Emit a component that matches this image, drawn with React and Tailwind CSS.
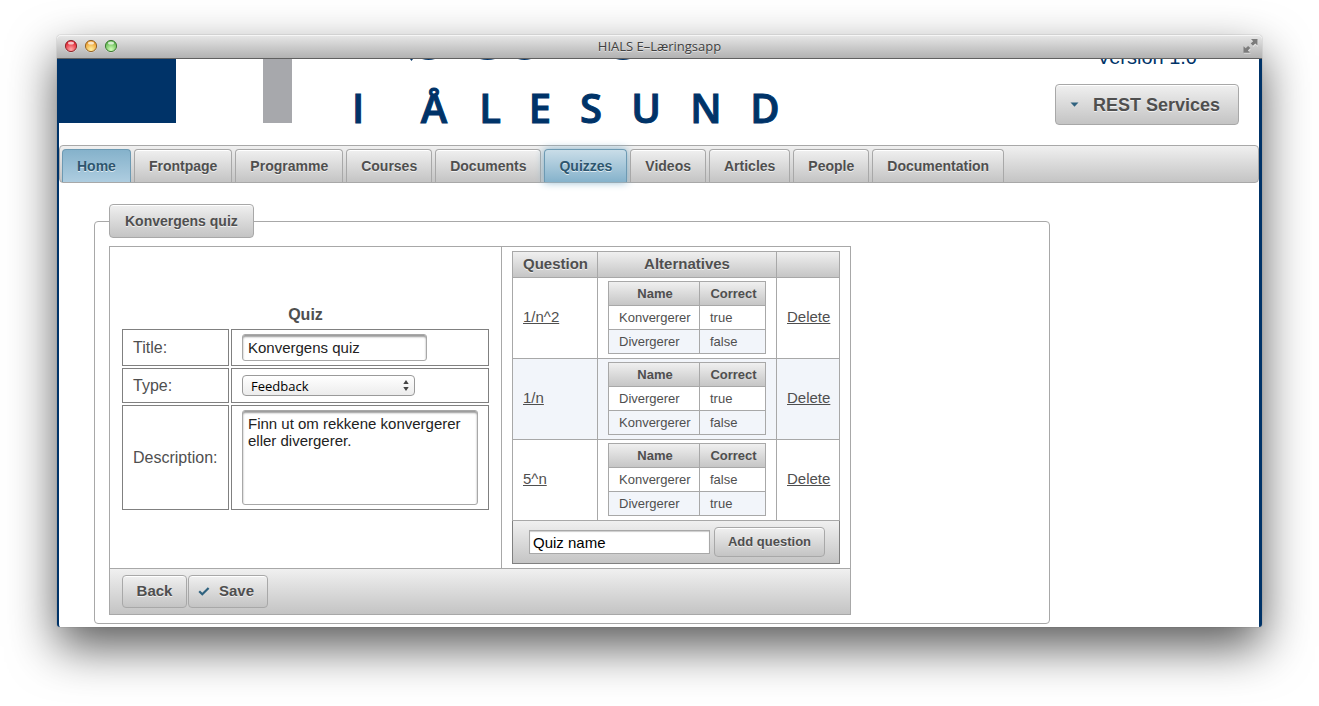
const FACE = "bg-linear-to-b from-[#f0f0f0] to-[#c4c4c4]";
const BUTTON =
  "rounded border border-[#a8a8a8] bg-linear-to-b from-[#f0f0f0] to-[#c4c4c4] font-bold text-[#4f4f4f] shadow-[inset_0_1px_0_#ffffff] [text-shadow:0_1px_0_rgba(255,255,255,0.7)]";

const tabs = [
  "Home",
  "Frontpage",
  "Programme",
  "Courses",
  "Documents",
  "Quizzes",
  "Videos",
  "Articles",
  "People",
  "Documentation",
];

const questions = [
  { name: "1/n^2", alternatives: [["Konvergerer", "true"], ["Divergerer", "false"]] },
  { name: "1/n", alternatives: [["Divergerer", "true"], ["Konvergerer", "false"]] },
  { name: "5^n", alternatives: [["Konvergerer", "false"], ["Divergerer", "true"]] },
];

function Light({ id, rim, dark, light }) {
  return (
    <svg width="14" height="14" viewBox="0 0 14 14" aria-hidden="true">
      <defs>
        <radialGradient id={id} cx="0.5" cy="0.8" r="0.7">
          <stop offset="0" stopColor={light} />
          <stop offset="1" stopColor={dark} />
        </radialGradient>
      </defs>
      <circle cx="7" cy="7.6" r="6" fill="#fff" opacity="0.5" />
      <circle cx="7" cy="7" r="5.6" fill={`url(#${id})`} stroke={rim} strokeWidth="1" />
      <ellipse cx="7" cy="4" rx="3" ry="1.6" fill="#fff" opacity="0.7" />
    </svg>
  );
}

function TitleBar() {
  return (
    <div className="flex h-6 items-center justify-between rounded-t border-b border-[#606060] bg-linear-to-b from-[#e8e8e8] to-[#b2b2b2] pr-1 pb-px pl-[7px] shadow-[inset_0_1px_0_#f6f6f6]">
      <div className="flex w-20 gap-[6px]">
        <Light id="close" rim="#8e2a2e" dark="#e01c2c" light="#ffa8a8" />
        <Light id="minimise" rim="#94652a" dark="#ec9a2a" light="#fff0a0" />
        <Light id="zoom" rim="#3f7a35" dark="#5cb44c" light="#d0ffb8" />
      </div>
      <h1 className="font-['Open_Sans','Noto_Sans',sans-serif] text-[13px] leading-5 text-[#404040] [text-shadow:0_1px_0_rgba(255,255,255,0.5)]">
        HIALS E–Læringsapp
      </h1>
      <div className="flex w-[83px] justify-end">
        <svg width="15" height="16" viewBox="0 0 15 16" aria-hidden="true">
          <path d="M8 2h7v7l-2.400-2.200-2 2.200-2.400-2.400 2.200-2zM1 9l2.400 2.200 2-2.200 2.400 2.400-2.200 2 2.200 2.300H1z" fill="#fff" opacity="0.45" />
          <path d="M8 1h6.500v6.500l-2.200-2.100-2.400 2.400-2.200-2.200 2.400-2.400z" fill="#7c7c7c" />
          <path d="M0.500 8.200l2.200 2.100 2.400-2.400 2.200 2.200-2.400 2.400 2.100 2.200H0.500z" fill="#7c7c7c" />
        </svg>
      </div>
    </div>
  );
}

function Logo() {
  return (
    <svg className="overflow-visible" width="722" height="64" viewBox="0 0 722 64" role="img" aria-label="Høgskolen i Ålesund">
      <rect x="0" y="0" width="117" height="64" fill="#003368" />
      <rect x="204" y="0" width="29" height="64" fill="#a7a8ac" />
      <path
        d="M351 0h3l-1.500 2zM363 0h13q-6.500 2-13 0zM421 0h15q-7.500 2-15 0zM459 0h13q-6.500 2-13 0zM557 0h14q-7 2-14 0z"
        fill="#003368"
      />
      <text
        x="299 375 431 481 532 587 647 706"
        y="64"
        fill="#003368"
        stroke="#003368"
        strokeWidth="1"
        fontFamily="'Open Sans','Noto Sans',sans-serif"
        fontSize="40"
        fontWeight="600"
        textAnchor="middle"
      >
        IÅLESUND
      </text>
    </svg>
  );
}

function Header() {
  return (
    <header className="flex justify-between">
      <Logo />
      <div className="flex flex-col items-end pr-5">
        <div className="flex h-2 items-end overflow-hidden pr-[42px]">
          <p className="text-xl leading-5 text-[#003368]">Version 1.0</p>
        </div>
        <button type="button" className={`mt-[17px] flex h-[41px] items-center gap-[14px] pr-[18px] pl-[14px] text-lg ${BUTTON}`}>
          <svg width="9" height="5" viewBox="0 0 9 5" aria-hidden="true">
            <path d="M0.500 0.500h8L4.500 4.700z" fill="#2f627f" />
          </svg>
          REST Services
        </button>
      </div>
    </header>
  );
}

function tabStyle(name) {
  if (name === "Home") return "border-[#6d9ab3] bg-linear-to-b from-[#85b2cb] to-[#aecde0] text-[#2d566f]";
  if (name === "Quizzes")
    return "border-[#6d9ab3] bg-linear-to-b from-[#c9dde8] to-[#85b2cb] text-[#2d566f] shadow-[0_0_8px_#85b2cb]";
  return "border-[#a8a8a8] bg-linear-to-b from-[#f0f0f0] to-[#c4c4c4] text-[#4f4f4f] shadow-[inset_0_1px_0_#ffffff]";
}

function Tabs() {
  return (
    <nav className={`mt-5 rounded border border-[#a8a8a8] ${FACE}`}>
      <ul className="flex gap-[3px] pt-[3px] pl-[2px]">
        {tabs.map((name) => (
          <li key={name}>
            <a
              href="#"
              className={`block h-[33px] rounded-t border border-b-0 px-[14px] text-[14px] leading-8 font-bold [text-shadow:0_1px_0_rgba(255,255,255,0.7)] ${tabStyle(name)}`}
            >
              {name}
            </a>
          </li>
        ))}
      </ul>
    </nav>
  );
}

function QuizForm() {
  const cell = "border border-[#808080] px-[10px] py-1";
  const field = "block rounded-[3px] border border-[#a8a8a8] bg-white px-[5px] text-[15px] text-[#222222] shadow-[inset_0_2px_2px_#999999]";
  return (
    <table className="w-full border-separate border-spacing-[2px] text-base text-[#4f4f4f]">
      <caption className="font-bold leading-6">Quiz</caption>
      <tbody>
        <tr>
          <th scope="row" className={`w-[107px] text-left font-normal ${cell}`}>
            <label htmlFor="title">Title:</label>
          </th>
          <td className={cell}>
            <input id="title" defaultValue="Konvergens quiz" className={`h-[27px] w-[185px] ${field}`} />
          </td>
        </tr>
        <tr>
          <th scope="row" className={`h-[35px] text-left font-normal ${cell}`}>
            <label htmlFor="type">Type:</label>
          </th>
          <td className={cell}>
            <div className="grid w-[173px] items-center">
              <select
                id="type"
                className="col-start-1 row-start-1 h-[21px] appearance-none rounded border border-[#9a9a9a] bg-linear-to-b from-white to-[#ececec] px-2 font-['Open_Sans','Noto_Sans',sans-serif] text-[13px] leading-[18px] text-black"
              >
                <option>Feedback</option>
              </select>
              <svg className="pointer-events-none col-start-1 row-start-1 mr-[6px] justify-self-end" width="6" height="11" viewBox="0 0 6 11" aria-hidden="true">
                <path d="M3 0l2.700 4H0.300zM3 11l2.700-4H0.300z" fill="#444" />
              </svg>
            </div>
          </td>
        </tr>
        <tr>
          <th scope="row" className={`text-left font-normal ${cell}`}>
            <label htmlFor="description">Description:</label>
          </th>
          <td className={cell}>
            <textarea
              id="description"
              defaultValue="Finn ut om rekkene konvergerer eller divergerer."
              className={`h-[95px] w-full resize-none py-1 leading-[17px] ${field}`}
            />
          </td>
        </tr>
      </tbody>
    </table>
  );
}

function Alternatives({ rows }) {
  const cell = "h-6 border border-[#a8a8a8] pr-2 pl-[10px]";
  return (
    <table className="w-full border-collapse bg-white text-[13px] leading-4">
      <thead>
        <tr className={FACE}>
          <th scope="col" className={cell}>Name</th>
          <th scope="col" className={`w-[66px] ${cell}`}>Correct</th>
        </tr>
      </thead>
      <tbody>
        {rows.map(([name, correct]) => (
          <tr key={name} className="even:bg-[#f2f5fa]">
            <td className={cell}>{name}</td>
            <td className={cell}>{correct}</td>
          </tr>
        ))}
      </tbody>
    </table>
  );
}

function Questions() {
  const cell = "border border-[#a8a8a8] px-[10px] pt-[3px] pb-1";
  return (
    <table className="w-[328px] table-fixed border-collapse text-[#4f4f4f]">
      <thead>
        <tr className={`h-[26px] text-[15px] leading-4 [text-shadow:0_1px_0_rgba(255,255,255,0.7)] ${FACE}`}>
          <th scope="col" className={`w-[85px] ${cell}`}>Question</th>
          <th scope="col" className={cell}>Alternatives</th>
          <th scope="col" aria-label="Actions" className={`w-[63px] ${cell}`} />
        </tr>
      </thead>
      <tbody>
        {questions.map((q) => (
          <tr key={q.name} className="text-[15px] even:bg-[#f2f5fa]">
            <td className={cell}>
              <a href="#" className="underline">{q.name}</a>
            </td>
            <td className={cell}>
              <Alternatives rows={q.alternatives} />
            </td>
            <td className={cell}>
              <a href="#" className="underline">Delete</a>
            </td>
          </tr>
        ))}
      </tbody>
      <tfoot>
        <tr className={FACE}>
          <td colSpan={3} className="h-[43px] border border-[#808080] border-t-[#a8a8a8] pr-3 pl-4">
            <div className="flex items-center gap-1">
              <input
                aria-label="Question name"
                defaultValue="Quiz name"
                className="h-6 w-[181px] border border-[#a8a8a8] bg-white px-[3px] text-[15px] text-black shadow-[inset_0_1px_1px_#cccccc]"
              />
              <button type="button" className={`h-[30px] w-[111px] text-[13px] whitespace-nowrap ${BUTTON}`}>
                Add question
              </button>
            </div>
          </td>
        </tr>
      </tfoot>
    </table>
  );
}

function QuizEditor() {
  return (
    <fieldset className="mt-[21px] ml-[35px] max-w-[956px] rounded border border-[#a8a8a8] px-[14px] pt-2 pb-2">
      <legend className={`px-[15px] text-[14px] leading-8 ${BUTTON}`}>Konvergens quiz</legend>
      <div className="w-[742px] border border-[#a8a8a8]">
        <div className="flex">
          <div className="flex flex-1 items-center px-[10px]">
            <QuizForm />
          </div>
          <div className="border-l border-[#a8a8a8] px-[10px] py-1">
            <Questions />
          </div>
        </div>
        <div className={`flex gap-px border-t border-[#a8a8a8] px-3 py-[6px] ${FACE}`}>
          <button type="button" className={`h-[33px] w-[65px] text-[15px] ${BUTTON}`}>
            Back
          </button>
          <button type="button" className={`flex h-[33px] w-20 items-center gap-[9px] pl-[9px] text-[15px] ${BUTTON}`}>
            <svg width="12" height="9" viewBox="0 0 12 9" aria-hidden="true">
              <path d="M1.200 4.200L4.300 7.300L10.600 1" fill="none" stroke="#2f627f" strokeWidth="2.200" />
            </svg>
            Save
          </button>
        </div>
      </div>
    </fieldset>
  );
}

export default function App() {
  return (
    <div className="bg-white px-[57px] pt-[35px] pb-[79px] font-['Liberation_Sans',Arial,sans-serif]">
      <div className="rounded shadow-[0_0_1px_#555555,0_20px_48px_rgba(0,0,0,0.65)]">
        <TitleBar />
        <main className="rounded-b-[3px] border-r-[3px] border-l-2 border-[#003368] bg-white pb-[3px]">
          <Header />
          <Tabs />
          <QuizEditor />
        </main>
      </div>
    </div>
  );
}
